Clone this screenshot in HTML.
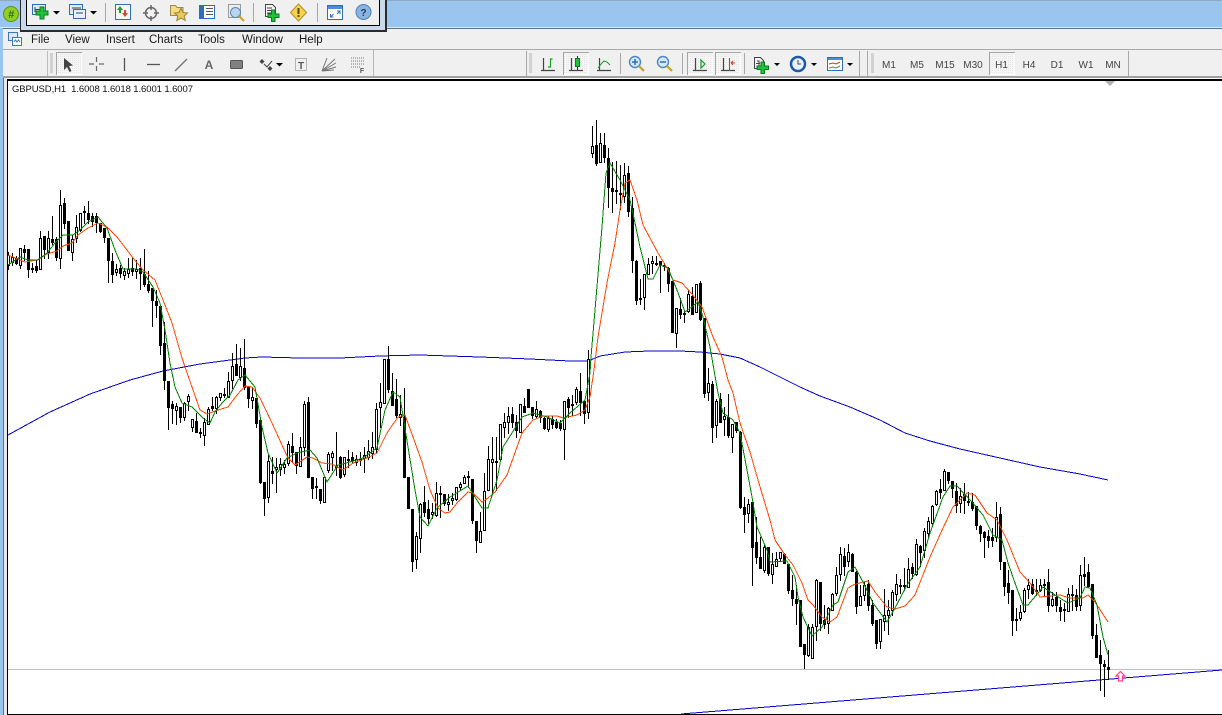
<!DOCTYPE html>
<html><head><meta charset="utf-8"><title>GBPUSD,H1</title>
<style>
html,body{margin:0;padding:0;background:#fff;width:1222px;height:715px;overflow:hidden}
svg{position:absolute;left:0;top:0;display:block}
text{font-family:"Liberation Sans",sans-serif}
.m{font-size:11.5px;fill:#1a1a1a}
.t{font-size:10px;fill:#444;text-anchor:middle}
.ax{fill:none;stroke:#444;stroke-width:1.200}
.cr{shape-rendering:crispEdges}
</style></head><body>
<svg id="s" width="1222" height="715" viewBox="0 0 1222 715" xmlns="http://www.w3.org/2000/svg">
<defs><pattern id="d" width="2" height="2" patternUnits="userSpaceOnUse"><rect width="2" height="2" fill="#f6f6f6"/><rect width="1" height="1" fill="#e4e4e4"/></pattern></defs>
<!-- chrome -->
<rect width="1222" height="28" fill="#9ac5ef"/>
<rect y="0" width="1222" height="1" fill="#8fa9c4"/>
<rect y="27" width="1222" height="1" fill="#dfeaf5"/>
<rect x="3" y="28" width="1219" height="1" fill="#5f6f80"/>
<rect y="28" width="3" height="687" fill="#9ac5ef"/>
<rect x="3" y="29" width="1219" height="48" fill="#f0f0f0"/>
<rect x="3" y="49" width="1219" height="1" fill="#a9a9a9"/>
<rect x="3" y="76" width="1219" height="2" fill="#a0a0a0"/>
<rect x="3" y="78" width="5" height="637" fill="#e6e6e6"/>
<rect x="3" y="78" width="1" height="637" fill="#707070"/>
<rect x="7" y="79" width="1215" height="2" fill="#000"/>
<rect x="7" y="79" width="1" height="636" fill="#000"/>
<rect x="7" y="714" width="1215" height="1" fill="#000"/>
<!-- logo -->
<circle cx="11" cy="14" r="7.500" fill="#8fd020" stroke="#5d8f20"/><text x="11" y="18" font-size="11" font-weight="bold" font-style="italic" text-anchor="middle" fill="#2f6b10">#</text>
<!-- popup toolbar -->
<rect x="20" y="-2" width="367" height="34" fill="#2b2b2b"/>
<rect x="21" y="-2" width="364" height="32" fill="#c8d9ec"/>
<rect x="26" y="-2" width="354" height="28" fill="#000"/>
<rect x="27" y="-2" width="352" height="27" fill="#f0f0f0"/>
<!-- popup icons -->
<g id="p">
<rect x="32.500" y="4.500" width="13" height="10" fill="#dfe9f5" stroke="#2d6fb4"/><path d="M35 7v5M35 9.500h7M40 7v5" stroke="#444" fill="none"/>
<path d="M36 11h4V7h4v4h4v4h-4v4h-4v-4h-4z" fill="#22c13c" stroke="#0b7b1f"/>
<path d="M53 11h7l-3.500 3.500z" fill="#000"/>
<rect x="69.500" y="4.500" width="13" height="10" fill="#dfe9f5" stroke="#2d6fb4"/><rect x="73.500" y="9.500" width="12" height="9" fill="#e8eff8" stroke="#2d6fb4"/><path d="M72 8h9M76 13h7" stroke="#444"/>
<path d="M90 11h7l-3.500 3.500z" fill="#000"/>
<rect x="105" y="3" width="1" height="19" fill="#a8a8a8"/>
<rect x="115.500" y="4.500" width="15" height="15" fill="#f6f6f6" stroke="#2d6fb4"/><path d="M120 6l3 4h-2v3h-2v-3h-2z" fill="#1fa02f"/><path d="M125 17l-3-4h2v-3h2v3h2z" fill="#d9482a"/>
<circle cx="151" cy="13" r="5.500" fill="none" stroke="#666" stroke-width="1.500"/><path d="M151 5v5M151 16v5M143 13h5M154 13h5" stroke="#666" stroke-width="1.500"/>
<path d="M170.500 5.500h5l1.500 2h6v8h-12.500z" fill="#f4dc83" stroke="#9a8a50"/><path d="M181 8l2 4.500 4.500.5-3.300 3 1 4.500-4.200-2.400-4.200 2.400 1-4.500-3.300-3 4.500-.5z" fill="#e8c860" stroke="#9c8434"/>
<rect x="199.500" y="5.500" width="15" height="13" fill="#fff" stroke="#2d6fb4"/><rect x="200" y="6" width="4" height="12" fill="#2f6fb5"/><path d="M206 8.500h7M206 11.500h7M206 14.500h7" stroke="#555"/>
<rect x="228.500" y="4.500" width="12" height="13" fill="#eee" stroke="#999"/><circle cx="235.500" cy="12.500" r="5" fill="#b9d4ef" stroke="#5c86b0"/><path d="M239 16l5 5" stroke="#c9a227" stroke-width="2"/>
<rect x="253" y="3" width="1" height="19" fill="#a8a8a8"/>
<path d="M265.500 4.500h7l3 3v9h-10z" fill="#f5f5f5" stroke="#444"/><path d="M267 8h5M267 10.500h6M267 13h4" stroke="#444"/>
<path d="M268 14h3.500v-4h3.500v4h4v3.500h-4v4h-3.500v-4h-3.500z" fill="#22c13c" stroke="#0b7b1f"/>
<path d="M298.500 4l8 8.500-8 8.500-8-8.500z" fill="#f7d24b" stroke="#b39a3a" stroke-width="1.200"/><rect x="297.500" y="8" width="2" height="6" fill="#5a4a10"/><rect x="297.500" y="15" width="2" height="2" fill="#5a4a10"/>
<rect x="317" y="3" width="1" height="19" fill="#a8a8a8"/>
<rect x="327.500" y="5.500" width="15" height="14" fill="#fff" stroke="#2d6fb4"/><rect x="328" y="6" width="14" height="3" fill="#4d8ed0"/>
<path d="M337 11h3v3M340 11l-3 3M330.500 14v3h3M330.500 17l3-3" stroke="#2d6fb4" fill="none"/>
<circle cx="363.500" cy="12" r="7.500" fill="#8ab4e0" stroke="#4a7fb8"/><text x="363.500" y="16" font-size="10" font-weight="bold" text-anchor="middle" fill="#1f3f6d">?</text>
</g>
<!-- menu -->
<rect x="8.500" y="32.500" width="9" height="8" fill="#dce8f5" stroke="#3a76b8"/><rect x="12.500" y="37.500" width="9" height="8" fill="#fff" stroke="#3a76b8"/><path d="M14 42l1.500-2 1.500 2 1.500-2 1.500 2" stroke="#3a76b8" fill="none"/>
<text class="m" x="31" y="43">File</text><text class="m" x="65" y="43">View</text><text class="m" x="106" y="43">Insert</text><text class="m" x="149" y="43">Charts</text><text class="m" x="198" y="43">Tools</text><text class="m" x="242" y="43">Window</text><text class="m" x="299" y="43">Help</text>
<!-- line toolbar -->
<rect x="47" y="51" width="1" height="25" fill="#bdbdbd"/>
<path d="M50 54h3M50 56h3M50 58h3M50 60h3M50 62h3M50 64h3M50 66h3M50 68h3M50 70h3M50 72h3" stroke="#b5b5b5"/>
<rect x="56.500" y="52.500" width="25" height="22" fill="url(#d)" stroke="#fdfdfd"/><path d="M56.500 75V52.500h25.500" fill="none" stroke="#a5a5a5"/>
<path d="M64 58l0 12 3-3 2.500 5 2-1-2.500-5 4-.5z" fill="#444"/>
<path d="M96.500 57v5M96.500 66v5M89 64h5M99 64h5" stroke="#666" stroke-width="1.200"/>
<path d="M124.500 58v13" stroke="#555" stroke-width="1.300"/>
<path d="M147 64.500h13" stroke="#555" stroke-width="1.300"/>
<path d="M175 71l12-12" stroke="#777" stroke-width="1.400"/>
<text x="209" y="69" font-size="12" font-weight="bold" text-anchor="middle" fill="#666">A</text>
<rect x="230.500" y="60.500" width="12" height="8" rx="1" fill="#808080" stroke="#555"/>
<path d="M262 59l2.500 2.500-2.500 2.500-2.500-2.500zM270 66l2.500 2.500-2.500 2.500-2.500-2.500z" fill="#444"/><path d="M264 64l3 3 5-6" stroke="#444" fill="none"/>
<path d="M276 63h7l-3.500 3.500z" fill="#000"/>
<rect x="295.500" y="58.500" width="11" height="12" fill="none" stroke="#777" stroke-dasharray="1 1"/><text x="301" y="69" font-size="10" font-weight="bold" text-anchor="middle" fill="#555">T</text>
<path d="M322 71l13-12M322 71l14-8M322 71l14-4M322 71l12-1M322 71l5-13" stroke="#777" fill="none"/>
<path d="M351 58h13M351 61h13M351 64h13M351 67h9" stroke="#777" stroke-dasharray="1 1"/><text x="362" y="73" font-size="7" font-weight="bold" text-anchor="middle" fill="#555">F</text>
<rect x="373" y="50" width="1" height="26" fill="#b8b8b8"/>
<!-- chart toolbar -->
<rect x="526" y="51" width="1" height="25" fill="#a8a8a8"/>
<path d="M529 54h3M529 56h3M529 58h3M529 60h3M529 62h3M529 64h3M529 66h3M529 68h3M529 70h3M529 72h3" stroke="#b5b5b5"/>
<path class="ax" d="M543.500 58v13M541 70.500h14"/><path d="M548 67h2.500v-8h2" stroke="#1a9a2a" fill="none" stroke-width="1.200"/>
<rect x="563.500" y="52.500" width="25" height="22" fill="url(#d)" stroke="#fdfdfd"/><path d="M563.500 75V52.500h25.500" fill="none" stroke="#a5a5a5"/>
<path class="ax" d="M571.500 58v13M569 70.500h14"/><path d="M577.500 56v14" stroke="#333"/><rect x="575.500" y="58.500" width="4" height="8" fill="#1fc13a" stroke="#0c7a1e"/>
<path class="ax" d="M599.500 58v13M597 70.500h14"/><path d="M598 68l4-5 2-2 3 1 3 3" stroke="#1a9a2a" fill="none"/>
<rect x="620" y="53" width="1" height="21" fill="#a8a8a8"/>
<circle cx="635" cy="62" r="5.500" fill="#d4e8fb" stroke="#4a86c4" stroke-width="1.400"/><path d="M632 62h6M635 59v6" stroke="#2d6fb4" stroke-width="1.500"/><path d="M639 66l5 5" stroke="#c9a227" stroke-width="2.200"/>
<circle cx="663" cy="62" r="5.500" fill="#d4e8fb" stroke="#4a86c4" stroke-width="1.400"/><path d="M660 62h6" stroke="#2d6fb4" stroke-width="1.500"/><path d="M667 66l5 5" stroke="#c9a227" stroke-width="2.200"/>
<rect x="682" y="53" width="1" height="21" fill="#a8a8a8"/>
<rect x="687.500" y="52.500" width="25" height="22" fill="url(#d)" stroke="#fdfdfd"/><path d="M687.500 75V52.500h25.500" fill="none" stroke="#a5a5a5"/>
<path class="ax" d="M695.500 58v13M693 70.500h14"/><path d="M701 60l4 4-4 4z" fill="none" stroke="#1a9a2a" stroke-width="1.200"/>
<rect x="715.500" y="52.500" width="25" height="22" fill="url(#d)" stroke="#fdfdfd"/><path d="M715.500 75V52.500h25.500" fill="none" stroke="#a5a5a5"/>
<path class="ax" d="M723.500 58v13M721 70.500h14"/><path d="M729.500 58v13" stroke="#2d6fb4"/><path d="M731 63h4M731 63l2-2M731 63l2 2" stroke="#d03a20" fill="none"/>
<rect x="744" y="53" width="1" height="21" fill="#a8a8a8"/>
<path d="M754.500 57.500h6l3 3v8h-9z" fill="#f5f5f5" stroke="#444"/><path d="M757 61h2v6M756 63.500h4" stroke="#444" fill="none"/>
<path d="M757 66h4v-4h3.500v4h4v3.500h-4v4h-3.500v-4h-4z" fill="#22c13c" stroke="#0b7b1f"/>
<path d="M774 63h6l-3 3z" fill="#000"/>
<circle cx="798" cy="64" r="7" fill="#eaf2fb" stroke="#1a5aa8" stroke-width="2.500"/><path d="M798 60v4h3" stroke="#444" fill="none"/>
<path d="M811 63h6l-3 3z" fill="#000"/>
<rect x="827.500" y="57.500" width="15" height="13" fill="#fff" stroke="#2d6fb4"/><rect x="828" y="58" width="14" height="2" fill="#4d8ed0"/><path d="M829 64l4-1 3 1 4-2" stroke="#b0482a" fill="none"/><path d="M829 68l4-1 3 1 4-2" stroke="#3c9a3a" fill="none"/>
<path d="M847 63h6l-3 3z" fill="#000"/>
<rect x="859" y="51" width="1" height="25" fill="#a8a8a8"/><rect x="867" y="51" width="1" height="25" fill="#a8a8a8"/>
<path d="M871 54h3M871 56h3M871 58h3M871 60h3M871 62h3M871 64h3M871 66h3M871 68h3M871 70h3M871 72h3" stroke="#b5b5b5"/>
<rect x="989.500" y="52.500" width="25" height="22" fill="url(#d)" stroke="#fdfdfd"/><path d="M989.500 75V52.500h25.500" fill="none" stroke="#a5a5a5"/>
<text class="t" x="889" y="68">M1</text><text class="t" x="917" y="68">M5</text><text class="t" x="945" y="68">M15</text><text class="t" x="973" y="68">M30</text><text class="t" x="1001.500" y="68">H1</text><text class="t" x="1029" y="68">H4</text><text class="t" x="1057" y="68">D1</text><text class="t" x="1086" y="68">W1</text><text class="t" x="1113" y="68">MN</text>
<rect x="1128" y="51" width="1" height="25" fill="#a8a8a8"/>
<!-- chart -->
<text x="12" y="92" font-size="9.500" fill="#111" textLength="181">GBPUSD,H1&#160;&#160;1.6008 1.6018 1.6001 1.6007</text>
<path d="M1105 81h10l-5 5z" fill="#b0b0b0"/>
<rect x="8" y="669" width="1214" height="1" fill="#c0c0c0"/>
<polyline class="cr" fill="none" stroke="#0000c8" stroke-width="1" points="8,435 50,412 90,394 130,380 163,371 200,364 245,358 262,357 300,358 340,358 380,356 420,355 480,357 530,359 570,361 588,361 600,356 625,352 650,351 680,351 700,352 720,354 740,358 760,367 800,387 820,396 850,407 880,420 905,433 930,441 960,449 1000,458 1040,467 1080,474 1108,480"/>
<path class="cr" d="M681 714L1222 670" stroke="#0000c8" stroke-width="1" fill="none"/>
<g id="c" class="cr"></g>
<polyline class="cr" fill="none" stroke="#ff4500" stroke-width="1" points="8,255 25,262 37,260 47,254 57,251 63,246 72,243 78,235 88,228 98,223 107,227 117,237 127,250 133,258 143,270 155,280 163,300 172,323 182,358 185,367 192,387 200,410 207,414 218,410 228,407 237,395 245,386 252,387 260,398 272,423 282,445 288,458 295,465 307,457 313,458 322,463 332,464 343,470 353,463 367,458 377,453 387,433 398,417 405,415 413,437 422,462 430,490 438,508 445,513 450,512 457,503 468,492 473,493 482,502 488,498 495,492 507,475 517,447 522,433 533,420 543,416 557,416 563,418 577,415 585,410 590,397 594,370 598,337 607,283 615,243 620,210 625,183 630,180 637,200 643,225 650,238 658,253 667,268 673,280 682,283 692,294 702,307 713,337 722,357 728,380 733,393 740,423 750,452 758,480 770,520 775,540 785,555 793,565 802,583 808,600 813,605 822,617 830,622 837,617 848,588 853,585 863,582 868,581 875,592 887,607 895,609 905,606 915,595 930,557 943,528 953,507 967,493 975,495 987,513 997,520 1007,540 1020,572 1030,583 1040,597 1060,595 1070,598 1083,598 1088,595 1095,602 1108,622"/>
<polyline class="cr" fill="none" stroke="#008000" stroke-width="1" points="8,265 20,257 28,260 38,260 47,253 55,243 63,235 73,235 80,230 88,222 98,217 107,228 115,250 123,269 137,269 143,272 153,287 160,303 165,330 170,363 175,387 182,403 192,407 203,418 210,423 215,412 222,403 230,395 238,380 245,375 255,387 262,427 268,453 277,473 287,458 297,453 310,450 317,458 327,482 338,465 350,462 363,458 377,448 385,410 393,392 400,397 408,447 415,490 420,517 428,526 437,508 450,497 468,486 475,497 482,508 488,508 497,480 503,447 512,433 522,417 533,413 547,417 560,423 570,413 585,400 590,373 591,357 595,310 602,227 606,173 610,163 620,180 630,200 635,223 640,247 648,279 653,279 660,265 668,268 677,290 685,312 698,302 703,317 710,347 718,393 723,413 733,420 740,433 747,470 752,497 757,527 767,550 770,562 787,561 795,577 798,597 803,617 812,636 822,627 833,605 838,602 848,572 855,567 863,582 873,603 887,622 895,608 907,585 920,567 930,533 943,497 950,486 957,486 972,502 983,515 993,535 1002,540 1008,563 1015,583 1023,605 1028,605 1043,587 1055,595 1068,603 1080,598 1085,587 1090,588 1097,605 1103,637 1108,655"/>
<path d="M1120.500 671.500l4.500 4.500h-2.500v5h-4v-5h-2.500z" fill="#fff" stroke="#ff4080" stroke-width="1.200"/>
</svg>
<script>
var D="8,252,255,265,269,1;12,253,257,262,265,1;16,256,258,263,264,0;20,248,248,265,268,1;24,245,249,252,260,0;28,249,249,269,277,0;32,263,268,269,272,0;36,260,266,270,272,0;40,231,238,269,269,1;44,236,236,249,258,0;48,231,238,252,258,1;52,216,239,242,244,0;56,237,239,257,260,0;60,190,205,258,268,1;64,198,203,223,228,0;68,221,221,250,250,0;72,235,239,252,260,1;76,215,227,238,242,1;80,213,213,230,231,1;84,206,211,212,223,0;88,201,213,219,223,0;92,213,216,221,226,0;96,213,216,222,232,0;100,223,223,231,232,0;104,228,228,237,242,0;108,238,238,260,282,0;112,253,261,274,282,0;116,264,269,272,275,1;120,265,268,273,277,0;124,268,271,275,279,1;128,258,269,273,277,1;132,257,268,271,275,0;136,260,269,271,278,1;140,258,268,273,289,0;144,249,274,284,286,0;148,271,284,290,292,0;152,288,288,300,326,0;156,290,301,305,317,0;160,306,306,345,354,0;164,322,343,380,389,0;"+
"168,381,381,407,429,0;172,401,404,408,423,0;176,403,406,410,424,1;180,407,407,417,422,0;184,402,403,417,420,1;188,394,396,401,410,1;192,419,419,427,431,1;196,413,421,432,432,0;200,428,432,433,437,0;204,418,422,435,445,1;208,407,409,424,424,1;212,397,406,408,410,0;216,396,397,408,413,1;220,393,393,397,400,1;224,388,394,395,397,0;228,372,381,397,397,1;232,353,366,380,388,1;236,344,364,375,375,0;240,348,366,377,380,1;244,339,368,387,389,0;248,387,387,398,407,0;252,387,397,400,408,1;256,398,398,423,427,0;260,420,420,482,483,0;264,482,482,498,515,0;268,454,461,497,502,1;272,457,471,473,483,0;276,458,467,469,492,1;280,458,464,469,475,1;284,460,464,467,473,1;288,441,444,463,465,1;292,433,446,452,462,0;296,452,452,465,473,0;300,437,447,466,466,1;304,401,404,447,455,1;308,397,402,477,477,0;312,477,477,488,498,0;316,478,486,487,498,0;320,489,489,500,503,0;324,477,477,502,502,1;328,452,454,470,472,1;332,451,453,457,470,1;336,432,466,467,475,0;340,456,457,477,478,0;344,457,457,474,476,1;348,450,459,460,467,0;352,452,457,460,463,0;356,455,459,462,465,1;360,452,459,460,465,0;364,447,455,458,472,1;368,440,451,457,459,1;372,432,447,453,458,1;376,403,409,449,452,1;380,383,402,407,427,1;384,359,359,403,403,1;388,346,359,389,392,0;392,373,391,405,405,0;396,379,399,415,417,0;400,395,414,417,425,1;"+
"404,388,417,477,477,0;408,477,477,508,508,0;412,509,509,561,571,0;416,532,536,559,568,1;420,503,504,538,552,1;424,486,502,512,516,0;428,500,509,518,523,0;432,503,512,514,518,1;436,482,493,515,516,1;440,486,493,494,517,1;444,494,494,503,505,0;448,494,502,504,510,1;452,493,498,500,504,1;456,487,487,499,500,1;460,482,484,487,490,1;464,475,477,483,483,1;468,471,476,477,487,0;472,479,479,520,523,0;476,521,521,540,552,0;480,512,531,542,542,1;484,473,491,530,530,1;488,446,459,490,490,1;492,437,459,462,492,1;496,437,461,462,490,0;500,424,424,459,461,1;504,413,422,427,437,1;508,407,416,422,433,1;512,407,414,422,427,0;516,415,422,430,437,0;520,404,404,432,432,1;524,398,406,412,412,0;528,389,389,407,407,0;532,407,407,415,418,0;536,401,409,416,418,1;540,410,411,417,422,0;544,417,418,428,429,0;548,416,418,429,431,1;552,416,419,424,428,0;556,419,422,427,428,0;560,420,423,428,430,0;564,401,401,429,459,1;568,397,399,407,417,0;572,395,404,405,415,0;576,387,389,402,404,1;580,373,391,402,415,0;584,401,401,413,423,0;588,350,359,412,418,1;"+
"592,126,146,153,157,1;596,120,145,163,165,0;600,133,143,162,162,1;604,133,145,157,162,0;608,148,158,187,207,0;612,162,188,191,212,0;616,161,190,191,203,0;620,165,193,194,209,0;624,163,175,196,202,1;628,166,173,211,216,0;632,197,208,260,272,0;636,260,261,300,304,0;640,279,298,299,304,0;644,274,274,297,309,1;648,258,264,274,274,1;652,256,261,263,273,1;656,256,263,264,265,0;660,261,261,265,292,0;664,263,265,266,270,0;668,267,268,283,291,0;672,281,281,332,332,0;676,308,308,333,347,1;680,298,309,314,318,0;684,311,313,314,322,0;688,290,294,311,312,1;692,287,296,314,314,0;696,284,284,312,312,1;700,281,283,319,320,0;704,318,318,393,397,0;708,368,383,392,400,1;712,381,384,427,442,0;716,399,401,425,437,1;720,393,399,422,422,0;724,407,416,419,435,1;728,394,417,435,437,0;732,424,424,437,452,1;736,422,422,430,432,0;740,431,432,507,508,0;744,497,507,514,532,0;748,499,504,513,522,1;752,502,502,547,585,0;756,517,542,557,563,0;760,537,557,568,568,0;764,545,547,570,572,1;768,547,547,573,575,0;772,553,564,574,583,1;776,552,559,566,566,1;780,552,552,558,560,1;784,553,554,563,563,0;788,564,564,590,593,0;"+
"792,575,590,598,605,0;796,585,599,603,624,0;800,600,600,646,646,0;804,644,644,654,668,0;808,624,627,655,656,1;812,624,627,658,658,1;816,579,580,626,640,1;820,582,582,623,630,0;824,605,620,624,628,0;828,607,608,623,633,1;832,593,594,610,610,1;836,567,575,593,595,1;840,547,554,574,580,1;844,548,556,566,575,0;848,544,552,561,566,1;852,553,554,571,571,0;856,571,572,606,613,0;860,585,596,605,605,1;864,582,585,595,600,1;868,580,584,605,610,0;872,600,605,623,625,0;876,620,620,643,648,0;880,619,619,641,648,1;884,589,615,621,630,1;888,600,610,615,634,1;892,590,592,610,615,1;896,574,584,594,600,1;900,579,585,586,593,0;904,568,585,586,590,0;908,558,569,587,587,1;912,563,567,573,578,0;916,539,544,574,575,1;920,545,546,552,566,0;924,528,531,550,557,1;928,517,521,533,538,1;932,505,506,523,525,1;936,490,491,504,505,1;940,479,489,492,498,0;944,469,471,490,490,1;948,472,472,480,483,0;952,481,481,488,497,0;956,483,491,505,512,0;960,488,496,503,512,1;964,483,494,500,513,0;968,492,501,502,505,0;972,493,502,508,510,0;976,506,506,525,529,0;980,525,526,533,541,0;984,531,532,537,557,0;988,530,536,540,547,0;992,528,537,540,546,0;996,502,517,537,541,1;1000,507,514,561,569,0;1004,562,562,586,595,0;1008,570,583,592,603,0;1012,590,590,620,635,0;1016,608,619,620,630,0;1020,605,612,618,620,1;1024,588,590,611,612,1;1028,579,585,589,598,1;1032,579,584,593,594,0;1036,579,590,591,595,0;1040,579,585,590,591,1;1044,579,584,585,596,0;1048,569,582,605,611,0;1052,592,599,605,606,1;1056,592,597,605,611,0;1060,600,607,611,620,0;1064,603,609,610,621,0;1068,588,594,611,611,1;1072,585,594,595,610,0;1076,589,595,606,610,0;1080,565,575,605,610,1;1084,557,574,576,585,0;1088,564,572,586,586,0;1092,584,584,635,638,0;1096,624,635,657,657,0;1100,640,655,663,690,0;1104,660,664,666,696,0;1108,650,667,669,679,0";
var w="",b="",u="";
D.split(";").forEach(function(r){var a=r.split(",").map(Number),x=a[0],h=a[1],t=a[2],e=a[3],l=a[4];
w+="M"+(x+.5)+" "+h+"V"+(l+1);
if(a[5])u+='<rect x="'+(x-.5)+'" y="'+(t+.5)+'" width="2" height="'+(e-t)+'" fill="#fff" stroke="#000" stroke-width="1"/>';
else b+="M"+(x-1)+" "+t+"h3v"+(e-t+1)+"h-3z";});
document.getElementById("c").innerHTML='<path d="'+w+'" stroke="#000" fill="none"/>'+u+'<path d="'+b+'" fill="#000"/>';
</script>
</body></html>
